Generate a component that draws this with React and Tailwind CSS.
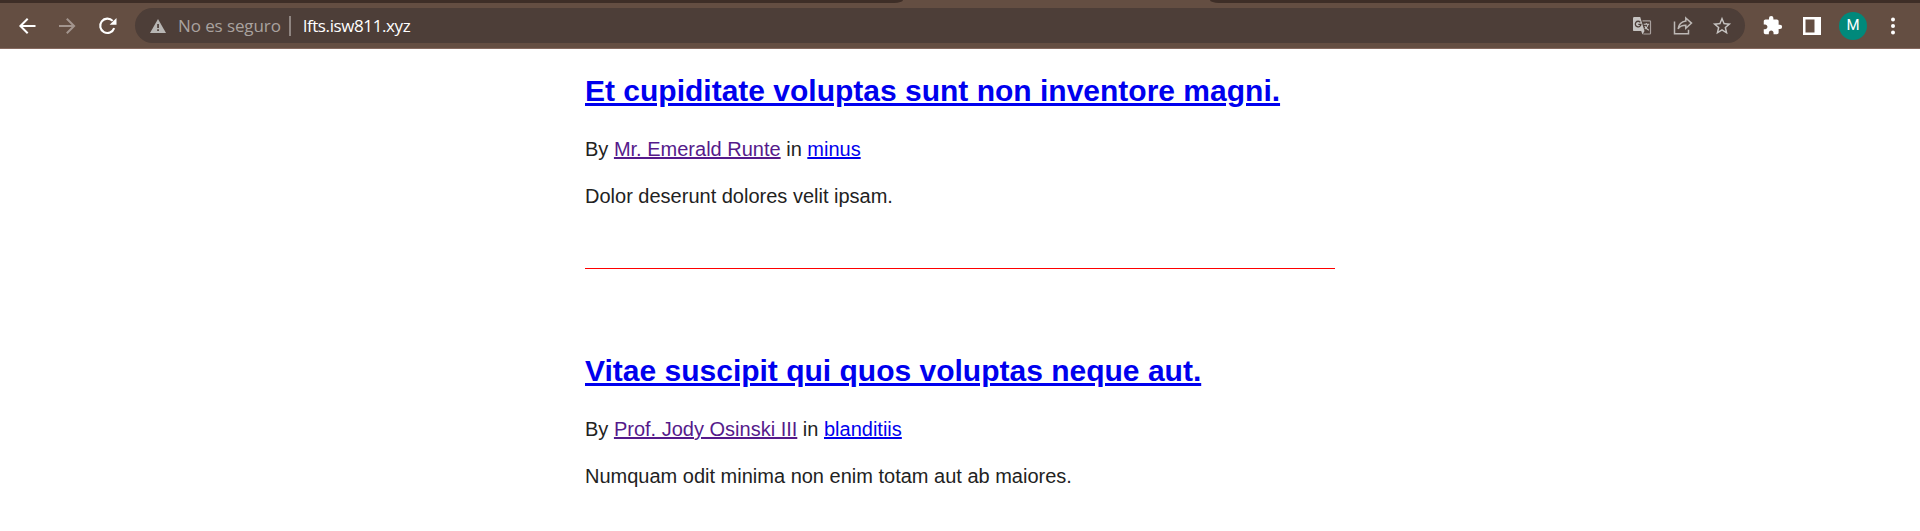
import React from "react";

const posts = [
  {
    title: "Et cupiditate voluptas sunt non inventore magni.",
    author: "Mr. Emerald Runte",
    category: "minus",
    excerpt: "Dolor deserunt dolores velit ipsam.",
  },
  {
    title: "Vitae suscipit qui quos voluptas neque aut.",
    author: "Prof. Jody Osinski III",
    category: "blanditiis",
    excerpt: "Numquam odit minima non enim totam aut ab maiores.",
  },
];

function BackIcon() {
  return (
    <svg className="size-5" viewBox="0 0 20 20" fill="none" stroke="#fff" strokeWidth="2">
      <path d="M18.500 10H3.700M10.700 2.700L3.400 10l7.300 7.300" />
    </svg>
  );
}

function ForwardIcon() {
  return (
    <svg className="size-5" viewBox="0 0 20 20" fill="none" stroke="#a3958e" strokeWidth="2">
      <path d="M2 10h14.800M9.800 2.700l7.300 7.300-7.300 7.300" />
    </svg>
  );
}

function ReloadIcon() {
  return (
    <svg className="size-5" viewBox="0 0 20 20">
      <path d="M17.200 12.200A7.200 7.200 0 1 1 15.700 4.900" fill="none" stroke="#fff" strokeWidth="2.100" />
      <path d="M19.500 1.900v6.900h-6.900z" fill="#fff" />
    </svg>
  );
}

function WarningIcon() {
  return (
    <svg className="h-[14px] w-4" viewBox="0 0 16 14">
      <path d="M8 0l8 14H0z" fill="#b8b6b4" />
      <path d="M7.200 5h1.700v4H7.200zM7.200 10.200h1.700v1.700H7.200z" fill="#4d3e38" />
    </svg>
  );
}

function TranslateIcon() {
  return (
    <svg className="size-5" viewBox="0 0 20 20">
      <path d="M10.500 4.800h7.200a.8.8 0 0 1 .8.8v11.600a.8.8 0 0 1-.8.8h-6.400" fill="none" stroke="#a9a19e" strokeWidth="1.200" />
      <path d="M2.200 1h6l4.300 14.100H2.200A1.200 1.200 0 0 1 1 13.900V2.200A1.200 1.200 0 0 1 2.200 1z" fill="#c6c3c1" />
      <path d="M9.200 15.100h3.300l-2 3.300z" fill="#c6c3c1" />
      <path d="M8.300 6.300A2.800 2.800 0 1 0 8.900 8.400H6.300" fill="none" stroke="#4d3e38" strokeWidth="1.300" />
      <path d="M11.700 8.300h5.500M14.300 7v1.300M16.200 8.300c-.5 2-1.900 3.700-3.500 4.800M12.800 10c.7 1.600 2.200 3.100 4 4.300" fill="none" stroke="#c6c3c1" strokeWidth="1.100" />
    </svg>
  );
}

function ShareIcon() {
  return (
    <svg className="size-5" viewBox="0 0 20 20" fill="none" stroke="#bdb8b5" strokeWidth="1.500">
      <path d="M1.500 5.500v12.200h14v-4" />
      <path d="M12.800 2l5.700 5.100-5.700 5.100V9.300c-3.800 0-6.100 1-7.700 3.500.6-4.200 3-7 7.700-7.700z" />
    </svg>
  );
}

function StarIcon() {
  return (
    <svg className="size-[22px]" viewBox="0 0 24 24" fill="#c6c3c1">
      <path d="M22 9.240l-7.190-.620L12 2 9.190 8.630 2 9.240l5.460 4.730L5.820 21 12 17.270 18.180 21l-1.630-7.030L22 9.240zM12 15.400l-3.760 2.270 1-4.280-3.320-2.880 4.380-.380L12 6.100l1.710 4.040 4.380.380-3.320 2.880 1 4.280L12 15.400z" />
    </svg>
  );
}

function ExtensionsIcon() {
  return (
    <svg className="size-[21px]" viewBox="0 0 24 24" fill="#fff">
      <path d="M20.500 11H19V7c0-1.100-.9-2-2-2h-4V3.500a2.500 2.500 0 0 0-5 0V5H4c-1.100 0-1.990.9-1.990 2v3.800H3.500c1.490 0 2.700 1.210 2.700 2.700s-1.210 2.700-2.700 2.700H2V20c0 1.100.9 2 2 2h3.800v-1.500c0-1.490 1.210-2.700 2.700-2.700s2.700 1.210 2.700 2.700V22H17c1.100 0 2-.9 2-2v-4h1.500a2.500 2.500 0 0 0 0-5z" />
    </svg>
  );
}

function SidePanelIcon() {
  return (
    <svg className="size-[18px]" viewBox="0 0 18 18">
      <path fillRule="evenodd" d="M0 0h18v18H0zM2.500 2.500v13H11.500v-13z" fill="#fff" />
    </svg>
  );
}

function MenuIcon() {
  return (
    <svg className="h-[18px] w-1" viewBox="0 0 4 18" fill="#fff">
      <circle cx="2" cy="2.500" r="2" />
      <circle cx="2" cy="9" r="2" />
      <circle cx="2" cy="15.500" r="2" />
    </svg>
  );
}

function Toolbar() {
  return (
    <header className="bg-[#644e42]">
      <div className="flex h-[3px] justify-between">
        <div className="w-[903px] rounded-br-[9px_3px] bg-[#3e2e27]" />
        <div className="w-[710px] rounded-bl-[9px_3px] bg-[#3e2e27]" />
      </div>
      <div className="flex h-[46px] items-center border-b border-[#85695f] pl-[17px]">
        <div className="flex w-[118px] gap-5">
          <BackIcon />
          <ForwardIcon />
          <ReloadIcon />
        </div>
        <div className="flex h-[35px] w-[1610px] items-center rounded-full bg-[#4d3e38] pr-3 pl-[15px] font-['Open_Sans','Noto_Sans',sans-serif] text-[17px] leading-5">
          <div className="mt-px"><WarningIcon /></div>
          <span className="ml-3 w-[111px] whitespace-nowrap tracking-[-0.1px] text-[#a9a29f]">No es seguro</span>
          <span className="h-5 w-[2px] bg-[#8f8581]" />
          <span className="ml-[12px] flex-1 whitespace-nowrap tracking-[-0.400px] text-white">lfts.isw811.xyz</span>
          <div className="flex items-center">
            <TranslateIcon />
            <div className="ml-[21px]"><ShareIcon /></div>
            <div className="ml-[18px]"><StarIcon /></div>
          </div>
        </div>
        <div className="ml-[17px]"><ExtensionsIcon /></div>
        <div className="ml-5"><SidePanelIcon /></div>
        <div className="ml-[18px] flex size-7 items-center justify-center rounded-full bg-[#00897b] font-[Roboto,sans-serif] text-[15px] text-white">M</div>
        <div className="ml-6"><MenuIcon /></div>
      </div>
    </header>
  );
}

function Post({ post }) {
  return (
    <article className="h-[280px]">
      <h1 className="pt-[21px] text-[30px] leading-[42px] font-bold whitespace-nowrap">
        <a href="#" className="text-[#0000ee] underline">{post.title}</a>
      </h1>
      <p className="mt-6 text-[20px] leading-[27px]">
        By <a href="#" className="text-[#551a8b] underline">{post.author}</a> in{" "}
        <a href="#" className="text-[#0000ee] underline">{post.category}</a>
      </p>
      <p className="mt-5 text-[20px] leading-[27px]">{post.excerpt}</p>
    </article>
  );
}

export default function App() {
  return (
    <div className="h-[531px] overflow-hidden bg-white">
      <Toolbar />
      <main className="mx-auto w-[750px] font-['Liberation_Sans',Arial,sans-serif] text-[#222]">
        <div className="h-[220px] border-b border-[#ff0000]">
          <Post post={posts[0]} />
        </div>
        <div className="pt-[60px]">
          <Post post={posts[1]} />
        </div>
      </main>
    </div>
  );
}
